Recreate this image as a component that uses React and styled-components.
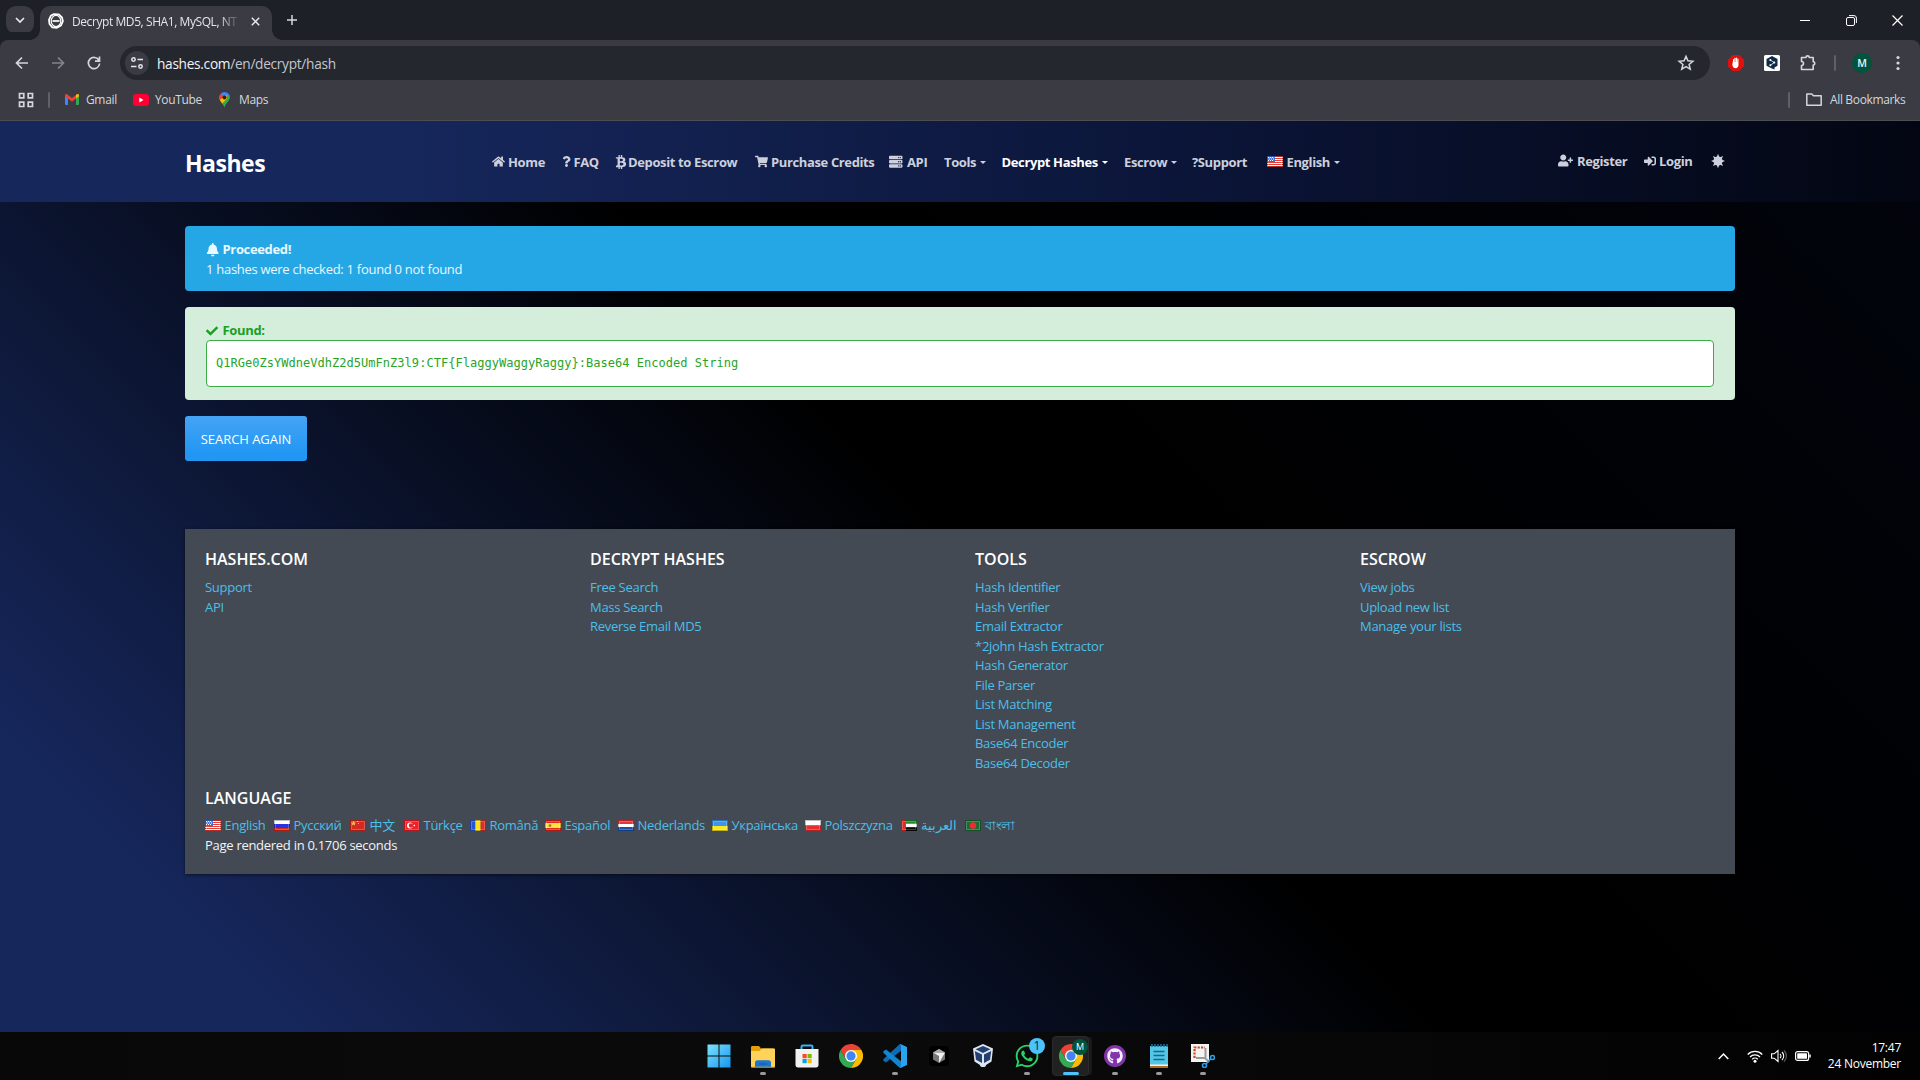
import React from "react";
import styled, { createGlobalStyle } from "styled-components";
import { FaHome, FaQuestion, FaBtc, FaShoppingCart, FaServer, FaUserPlus, FaSignInAlt, FaBell, FaCheck, FaWhatsapp, FaGithub } from "react-icons/fa";

const UI = `"Open Sans", "Noto Sans", "Noto Sans CJK SC", sans-serif`;

const GlobalStyle = createGlobalStyle`
  * { box-sizing: border-box; }
  html, body { margin: 0; background: #000; }
  body { font-family: ${UI}; overflow: hidden; }
  svg { display: block; flex: none; }
`;

const Screen = styled.div`
  width: 1920px;
  height: 1080px;
  display: flex;
  flex-direction: column;
`;

/* ---------- browser chrome ---------- */
const TabStrip = styled.div`
  height: 40px;
  background: #1d2027;
  display: flex;
  align-items: flex-start;
  padding-left: 6px;
`;
const TabSearch = styled.div`
  width: 28px;
  height: 28px;
  margin: 6px 6px 0 0;
  border-radius: 10px;
  background: #3a3b43;
  display: grid;
  place-items: center;
`;
const Tab = styled.div`
  position: relative;
  width: 232px;
  height: 34px;
  margin-top: 6px;
  border-radius: 10px 10px 0 0;
  background: #3a3b43;
  display: flex;
  align-items: center;
  padding: 0 8px 4px 8px;
  &::before, &::after {
    content: "";
    position: absolute;
    bottom: 0;
    width: 10px;
    height: 10px;
  }
  &::before { left: -10px; background: radial-gradient(circle at 0 0, transparent 9.5px, #3a3b43 10px); }
  &::after { right: -10px; background: radial-gradient(circle at 100% 0, transparent 9.5px, #3a3b43 10px); }
`;
const TabTitle = styled.div`
  width: 168px;
  margin: 0 11px 0 8px;
  white-space: nowrap;
  font-size: 12px;
  letter-spacing: -0.42px;
  color: #e4e5ea;
  mask-image: linear-gradient(90deg, #000 148px, transparent 168px);
`;
const NewTab = styled.div`
  margin: 14px 0 0 14px;
`;
const WindowButtons = styled.div`
  margin-left: auto;
  display: flex;
  height: 40px;
`;
const WindowButton = styled.div`
  width: 46px;
  display: grid;
  place-items: center;
`;
const Toolbar = styled.div`
  height: 46px;
  background: #3a3b43;
  border-radius: 8px 8px 0 0;
  box-shadow: 0 -8px 0 0 #1d2027;
  display: flex;
  align-items: center;
`;
const ToolSlot = styled.div`
  width: ${(p) => p.$w || 36}px;
  display: grid;
  place-items: center;
`;
const Omnibox = styled.div`
  margin-left: 4px;
  width: 1590px;
  height: 34px;
  border-radius: 17px;
  background: #25272f;
  display: flex;
  align-items: center;
  padding: 0 14px 0 5px;
`;
const SiteInfo = styled.div`
  width: 24px;
  height: 24px;
  border-radius: 50%;
  background: #3a3b43;
  display: grid;
  place-items: center;
`;
const Url = styled.div`
  flex: 1;
  margin-left: 8px;
  font-size: 13.7px;
  letter-spacing: -0.3px;
  color: #c3c6ce;
  b { font-weight: 400; color: #f2f3f6; }
`;
const Bookmarks = styled.div`
  height: 35px;
  background: #3a3b43;
  border-bottom: 1px solid #4d4e52;
  display: flex;
  align-items: center;
  padding: 0 15px 7px 18px;
  font-size: 12px;
  letter-spacing: -0.35px;
  color: #d5d7dd;
`;
const Divider = styled.div`
  width: 2px;
  height: 16px;
  border-radius: 1px;
  background: #5f616a;
  margin: ${(p) => p.$m || 0};
`;
const Bookmark = styled.div`
  display: flex;
  align-items: center;
  gap: ${(p) => p.$gap || 7}px;
  width: ${(p) => (p.$w ? p.$w + "px" : "auto")};
  white-space: nowrap;
`;
const Spacer = styled.div` flex: 1; `;
const Avatar = styled.div`
  width: 20px;
  height: 20px;
  border-radius: 50%;
  background: #00533f;
  color: #f0f4f2;
  font-size: 10.5px;
  font-weight: 600;
  display: grid;
  place-items: center;
`;

/* ---------- page ---------- */
const Page = styled.main`
  height: 911px;
  background: linear-gradient(45deg, #16275c 0%, #16275c 10%, #000 51%, #000 60%, #02040d 100%);
`;
const Header = styled.header`
  height: 81px;
  background: linear-gradient(90deg, #16275c 0%, #16275c 20%, #0b1538 62%, #030612 100%);
  display: flex;
  align-items: center;
  padding: 0 185px;
  color: #cdd0dc;
  font-size: 13px;
  font-weight: 700;
  letter-spacing: -0.37px;
  white-space: nowrap;
`;
const Brand = styled.div`
  width: 307px;
  font-size: 23px;
  letter-spacing: -0.5px;
  color: #fff;
  padding-top: 3px;
`;
const NavItem = styled.a`
  display: flex;
  align-items: center;
  width: ${(p) => p.$w}px;
  color: ${(p) => (p.$active ? "#fff" : "inherit")};
`;
const IconSlot = styled.span`
  width: ${(p) => p.$w}px;
  flex: none;
`;
const Caret = styled.i`
  margin: 1px 0 0 4px;
  border: 3px solid transparent;
  border-top-color: currentColor;
  border-bottom: 0;
`;
const Account = styled.div`
  margin-left: auto;
  padding-bottom: 2px;
  display: flex;
  align-items: center;
`;
const Container = styled.div`
  width: 1550px;
  margin: 0 auto;
  padding-top: 24px;
  font-size: 13px;
  line-height: 19.5px;
  letter-spacing: -0.28px;
`;
const Alert = styled.section`
  border-radius: 4px;
  padding: 14px 21px 0;
  height: ${(p) => p.$h}px;
  background: ${(p) => p.$bg};
  color: ${(p) => p.$fg};
  margin-bottom: 16px;
`;
const AlertTitle = styled.div`
  display: flex;
  align-items: center;
  gap: ${(p) => p.$gap}px;
  font-weight: 700;
  letter-spacing: -0.34px;
`;
const ResultBox = styled.div`
  height: 47px;
  margin-top: -1px;
  border: 1px solid #3aab47;
  border-radius: 4px;
  background: #fff;
  padding: 0 9px 1px;
  display: flex;
  align-items: center;
  color: #28a428;
  font: 12px "DejaVu Sans Mono", monospace;
  letter-spacing: 0.03px;
`;
const SearchAgain = styled.button`
  display: block;
  width: 122px;
  height: 45px;
  border: 0;
  border-radius: 3px;
  background: linear-gradient(#45a4f5, #2196f3 85%);
  color: #fff;
  font: 13px ${UI};
  letter-spacing: -0.05px;
  padding: 0;
  white-space: nowrap;
`;
const Footer = styled.footer`
  height: 345px;
  margin-top: 68px;
  background: #434a54;
  padding: 20px 0 0 20px;
  box-shadow: 0 1px 3px #0008;
`;
const Columns = styled.div`
  display: grid;
  grid-template-columns: repeat(4, 385px);
  height: 239px;
`;
const Heading = styled.h5`
  margin: 0 0 9px;
  font-size: 16px;
  line-height: 20px;
  font-weight: 600;
  letter-spacing: 0;
  color: #fff;
`;
const FooterLink = styled.a`
  display: block;
  color: #4bbfe8;
`;
const Languages = styled.div`
  display: flex;
  height: 19.5px;
  align-items: center;
  color: #4bbfe8;
  margin-top: -1px;
`;
const Language = styled.a`
  display: flex;
  align-items: center;
  gap: 3.5px;
  width: ${(p) => p.$w}px;
  white-space: nowrap;
`;
const Rendered = styled.div` color: #f3f4f5; `;

/* ---------- taskbar ---------- */
const Taskbar = styled.div`
  height: 48px;
  background: linear-gradient(90deg, #080808, #0b0b0b 45%, #020202);
  display: grid;
  grid-template-columns: 1fr auto 1fr;
`;
const Apps = styled.div`
  grid-column: 2;
  display: flex;
  padding-left: 2px;
`;
const AppButton = styled.div`
  position: relative;
  width: 44px;
  display: grid;
  place-items: center;
`;
const AppPlate = styled.div`
  position: absolute;
  inset: 4px 4px 4px 3px;
  border-radius: 4px;
  background: #212121;
  border: 1px solid #2b2b2b;
  box-shadow: 4px 0 0 -1px #1a1a1a;
`;
const AppArt = styled.div` position: relative; `;
const Indicator = styled.div`
  position: absolute;
  bottom: 5px;
  left: 50%;
  transform: translateX(-50%);
  width: ${(p) => (p.$active ? 16 : 6)}px;
  height: 3px;
  border-radius: 2px;
  background: ${(p) => (p.$active ? "#4cc2ff" : "#9a9a9a")};
`;
const Badge = styled.div`
  position: absolute;
  top: ${(p) => p.$top}px;
  right: -5px;
  width: 16px;
  height: 16px;
  border-radius: 50%;
  font-size: ${(p) => p.$size}px;
  line-height: 16px;
  text-align: center;
  background: ${(p) => p.$bg};
  color: ${(p) => p.$fg};
`;
const Tray = styled.div`
  display: flex;
  justify-content: flex-end;
  align-items: center;
  padding-right: 19px;
  color: #fff;
`;
const TraySlot = styled.div`
  width: ${(p) => p.$w}px;
  display: grid;
  place-items: center;
`;
const Clock = styled.div`
  width: 82px;
  text-align: right;
  font-size: 12px;
  line-height: 16px;
  letter-spacing: -0.25px;
`;

/* ---------- drawings ---------- */
const S = ({ s = 24, w, h, vb = "0 0 24 24", children, ...r }) => (
  <svg width={w || s} height={h || s} viewBox={vb} fill="none" {...r}>{children}</svg>
);

const FlagArt = {
  us: <><path fill="#fff" d="M0 0h16v11H0z" /><path stroke="#e33f3a" d="M0 .5h16M0 2.5h16M0 4.5h16M0 6.5h16M0 8.5h16M0 10.5h16" /><path fill="#3b6fd8" d="M0 0h8v6H0z" /><path stroke="#fff" strokeDasharray="1 1" d="M1 1.5h6M2 3h5M1 4.5h6" /></>,
  ru: <><path fill="#fff" d="M0 0h16v4H0z" /><path fill="#2a32e0" d="M0 4h16v4H0z" /><path fill="#d8281c" d="M0 8h16v3H0z" /></>,
  cn: <><path fill="#d42a22" d="M0 0h16v11H0z" /><path fill="#f6c945" d="m3.5 1 .8 1.6 1.7.1-1.3 1 .5 1.8-1.7-1-1.6 1 .5-1.8-1.3-1 1.8-.1zM7 1h1v1H7zM8 3h1v1H8z" /></>,
  tr: <><path fill="#ee2029" d="M0 0h16v11H0z" /><circle cx="6" cy="5.5" r="3" fill="#fff" /><circle cx="7" cy="5.5" r="2.2" fill="#ee2029" /><path fill="#fff" d="m9 5.5 2-1v2z" /></>,
  ro: <><path fill="#2a55d0" d="M0 0h5.3v11H0z" /><path fill="#fbe122" d="M5.3 0h5.4v11H5.3z" /><path fill="#e22a28" d="M10.7 0H16v11h-5.3z" /></>,
  es: <><path fill="#e0281e" d="M0 0h16v11H0z" /><path fill="#fde63c" d="M0 3h16v5H0z" /><circle cx="5" cy="5.5" r="1.5" fill="#c8762a" /></>,
  nl: <><path fill="#ea3338" d="M0 0h16v4H0z" /><path fill="#fff" d="M0 4h16v3H0z" /><path fill="#1c4fa8" d="M0 7h16v4H0z" /></>,
  ua: <><path fill="#3c95ec" d="M0 0h16v6H0z" /><path fill="#fbe722" d="M0 6h16v5H0z" /></>,
  pl: <><path fill="#fff" d="M0 0h16v5.5H0z" /><path fill="#e82d30" d="M0 5.5h16V11H0z" /></>,
  ae: <><path fill="#1f8a2d" d="M0 0h16v3.7H0z" /><path fill="#fff" d="M0 3.7h16v3.6H0z" /><path fill="#0a0a0a" d="M0 7.3h16V11H0z" /><path fill="#e62a2a" d="M0 0h5v11H0z" /></>,
  bd: <><path fill="#1c6a35" d="M0 0h16v11H0z" /><circle cx="8" cy="5.5" r="3.3" fill="#ee2d30" /></>,
};
const Flag = ({ c }) => (
  <S w={16} h={11} vb="0 0 16 11">
    {FlagArt[c]}
    <path stroke="#000" strokeOpacity=".25" d="M.5.5h15v10H.5z" />
    <path stroke="#fff" strokeOpacity=".22" d="M1.5 1.5h13v8h-13z" />
  </S>
);

const ChromeLogo = () => (
  <S vb="0 0 48 48">
    <path fill="#ea4335" d="M3.2 12A24 24 0 0 1 24 0c8.9 0 16.7 4.8 20.8 12H24L13.6 30z" />
    <path fill="#34a853" d="M3.2 12 13.6 30 24 36l10.4-6L24 48A24 24 0 0 1 3.2 12z" />
    <path fill="#fbbc04" d="M24 12h20.8A24 24 0 0 1 24 48l10.4-18z" />
    <circle cx="24" cy="24" r="12" fill="#fff" />
    <circle cx="24" cy="24" r="9.3" fill="#4285f4" />
  </S>
);
const WindowsLogo = () => (
  <S>
    <defs><linearGradient id="win" x1="0" y1="0" x2="1" y2="1"><stop stopColor="#7de3fb" /><stop offset="1" stopColor="#1796f0" /></linearGradient></defs>
    <path fill="url(#win)" d="M.5.5h11v11H.5zM12.500.5h11v11h-11zM.5 12.5h11v11H.5zM12.5 12.5h11v11h-11z" />
  </S>
);
const ExplorerLogo = () => (
  <S>
    <path fill="#e3a008" d="M0 3.500C0 2.500.6 2 1.5 2H8l2 2.5h12.5V10H0z" />
    <path fill="#ffd25a" d="M0 7h8.5L11 4.5h12c.6 0 1 .4 1 1V22.500c0 .6-.4 1-1 1H1c-.6 0-1-.4-1-1z" />
    <path fill="#1976d2" d="M4 23.500V19c0-1.700 1-2.700 2.600-2.700h10.800c1.700 0 2.600 1 2.600 2.700v4.500z" />
    <path stroke="#0e5aa8" d="M8 20h8" />
    <path fill="#e8a317" d="M0 22.500h24c0 .6-.4 1-1 1H1c-.6 0-1-.4-1-1z" opacity=".6" />
  </S>
);
const StoreLogo = () => (
  <S>
    <path stroke="#35b4f0" strokeWidth="2" d="M6.500 6V2.800c0-.7.4-1.300 1.200-1.300h8.600c.8 0 1.200.5 1.200 1.300V6" />
    <path fill="#f1f1f1" d="M.5 5h23v16c0 1.500-1 2.500-2.500 2.500H3C1.500 23.500.5 22.500.5 21z" />
    <path fill="#f25022" d="M7.500 10h4.200v4.200H7.500z" /><path fill="#7fba00" d="M12.500 10h4.200v4.200h-4.200z" />
    <path fill="#00a4ef" d="M7.500 15h4.200v4.200H7.500z" /><path fill="#ffb900" d="M12.500 15h4.200v4.200h-4.200z" />
  </S>
);
const CodeLogo = () => (
  <S>
    <path fill="#0b6cb5" d="M18 0v6.800L3 18.600.3 16.800v-1.500L16 .8z" />
    <path fill="#1384cf" d="M18 24v-6.800L3 5.400.3 7.200v1.500L16 23.200z" />
    <path fill="#2aa4ee" d="M17.500 0 24 3v18l-6.500 3-1.500-.8c1.200.6 2-.3 2-1.200V2c0-.9-.8-1.800-2-1.200z" />
  </S>
);
const CubeEditorLogo = () => (
  <S s={20} vb="0 0 20 20">
    <rect width="20" height="20" rx="4" fill="#000" />
    <path fill="#777" d="m10 3 6 3.500v7L10 17l-6-3.500v-7z" />
    <path fill="#f0f0f0" d="M4 6.500h12L10 17v-7z" /><path fill="#aaa" d="m10 3 6 3.500H4z" />
  </S>
);
const VBoxLogo = () => (
  <S>
    <path fill="#dfe6f2" d="m12 0 10 4.500-1.500 13L15 21c0 1.500-1 2-3 2s-3-.5-3-2l-5.500-3.500L2 4.500z" />
    <path fill="#22406f" d="m12 2 7.500 3.200L12 9 4.500 5.200zM3.800 7l7.200 3.600V19l-6-3.300zM20.200 7 13 10.600V19l6-3.300z" />
  </S>
);
const NotepadLogo = () => (
  <S>
    <path fill="#56c6e6" d="M3 2h18v19H3z" /><path fill="#f4f4f4" d="M3 20.500h18v1.500H3z" /><path fill="#b86a1c" d="M3 22h18v2H3z" />
    <path stroke="#1b6f96" strokeWidth="1.500" d="M5 0v3M8 0v3M11 0v3M14 0v3M17 0v3M20 0v3" />
    <path stroke="#13698f" strokeWidth="1.300" d="M6.500 7.500h11M6.500 11.500h11M6.500 15.500h11" />
  </S>
);
const SnipLogo = () => (
  <S>
    <path fill="#f3f3f3" d="M0 0h18v18H0z" />
    <path stroke="#d1421d" strokeWidth="2.200" strokeDasharray="2.200 1.200" d="M3.500 14V3.500H14" />
    <path stroke="#9b9b9b" strokeWidth="2" d="M5 14h9.500V4M14 14l4 4" />
    <circle cx="21.500" cy="13.500" r="2" stroke="#2f9fe0" strokeWidth="1.600" /><circle cx="13.500" cy="21.500" r="2" stroke="#2f9fe0" strokeWidth="1.600" />
    <path stroke="#2f9fe0" strokeWidth="1.600" d="m19.500 15-4.500 5" />
  </S>
);
const GithubLogo = () => (
  <S><circle cx="12" cy="12" r="11" fill="#8035a8" /><g transform="translate(4 4)"><FaGithub size={16} color="#f5eefa" /></g></S>
);

const apps = [
  { art: <WindowsLogo /> },
  { art: <ExplorerLogo />, open: true },
  { art: <StoreLogo /> },
  { art: <ChromeLogo /> },
  { art: <CodeLogo />, open: true },
  { art: <CubeEditorLogo /> },
  { art: <VBoxLogo /> },
  { art: <><FaWhatsapp size={26} color="#25d366" /><Badge $top={-5} $size={12} $bg="#4cc2ff" $fg="#082a3c">1</Badge></>, open: true },
  { art: <><ChromeLogo /><Badge $top={-5} $size={9} $bg="#00533f" $fg="#fff">M</Badge></>, open: true, active: true },
  { art: <GithubLogo />, open: true },
  { art: <NotepadLogo />, open: true },
  { art: <SnipLogo />, open: true },
];

const nav = [
  { w: 69, icon: <FaHome size={13} />, iw: 16, text: "Home" },
  { w: 52.5, icon: <FaQuestion size={11} />, iw: 12.5, text: "FAQ" },
  { w: 141.5, icon: <FaBtc size={14} />, iw: 14.5, text: "Deposit to Escrow" },
  { w: 134, icon: <FaShoppingCart size={13} />, iw: 16, text: "Purchase Credits" },
  { w: 55, icon: <FaServer size={13.500} />, iw: 18, text: "API" },
  { w: 57.5, text: "Tools", caret: true },
  { w: 122.5, text: "Decrypt Hashes", caret: true, active: true },
  { w: 68, text: "Escrow", caret: true },
  { w: 75, text: "?Support" },
  { w: 74, icon: <Flag c="us" />, iw: 19.5, text: "English", caret: true },
];

const footer = [
  ["HASHES.COM", ["Support", "API"]],
  ["DECRYPT HASHES", ["Free Search", "Mass Search", "Reverse Email MD5"]],
  ["TOOLS", ["Hash Identifier", "Hash Verifier", "Email Extractor", "*2john Hash Extractor", "Hash Generator", "File Parser", "List Matching", "List Management", "Base64 Encoder", "Base64 Decoder"]],
  ["ESCROW", ["View jobs", "Upload new list", "Manage your lists"]],
];

const languages = [
  ["us", "English", 69], ["ru", "Русский", 76], ["cn", "中文", 54], ["tr", "Türkçe", 66], ["ro", "Română", 75],
  ["es", "Español", 73], ["nl", "Nederlands", 94], ["ua", "Українська", 93], ["pl", "Polszczyzna", 96], ["ae", "العربية", 64], ["bd", "বাংলা", 60],
];

function Browser() {
  return (
    <>
      <TabStrip>
        <TabSearch><S s={10} vb="0 0 10 10"><path stroke="#e8e9ee" strokeWidth="1.700" d="m1 3 4 4 4-4" /></S></TabSearch>
        <Tab>
          <S s={16} vb="0 0 16 16"><path stroke="#fff" strokeWidth="1.800" strokeLinejoin="round" d="m5.500 1.200 5.300.2 3.200 3.100.9 3.700-2 4.300-4 2.300-4.600-.4L1.500 11 1 6.800l1.800-4z" /><ellipse cx="8" cy="8" rx="4.800" ry="5.600" stroke="#fff" strokeWidth="1.200" /><path stroke="#fff" strokeWidth="1.700" d="M4.500 8h7" /></S>
          <TabTitle>Decrypt MD5, SHA1, MySQL, NT</TabTitle>
          <S s={9} vb="0 0 9 9"><path stroke="#e8e9ee" strokeWidth="1.500" d="m.8.8 7.400 7.400M8.200.8.8 8.200" /></S>
        </Tab>
        <NewTab><S s={12} vb="0 0 12 12"><path stroke="#d5d7dd" strokeWidth="1.500" d="M6 1v10M1 6h10" /></S></NewTab>
        <WindowButtons>
          <WindowButton><S s={10} vb="0 0 10 10"><path stroke="#fff" d="M0 5.500h10" /></S></WindowButton>
          <WindowButton><S s={11} vb="0 0 11 11"><rect x=".5" y="2.500" width="8" height="8" rx="1.500" stroke="#fff" /><path stroke="#fff" d="M3 .6h5A2.400 2.400 0 0 1 10.400 3v5" /></S></WindowButton>
          <WindowButton><S s={11} vb="0 0 11 11"><path stroke="#fff" strokeWidth="1.200" d="m.5.5 10 10m0-10-10 10" /></S></WindowButton>
        </WindowButtons>
      </TabStrip>
      <Toolbar>
        <ToolSlot $w={44}><S s={14} vb="0 0 14 14"><path stroke="#d5d7dd" strokeWidth="1.700" d="M13 7H2M7 1.500 1.500 7 7 12.500" /></S></ToolSlot>
        <ToolSlot $w={28}><S s={14} vb="0 0 14 14"><path stroke="#83858d" strokeWidth="1.700" d="M1 7h11M7 1.500 12.500 7 7 12.500" /></S></ToolSlot>
        <ToolSlot $w={44}><S s={14} vb="0 0 14 14"><path stroke="#d5d7dd" strokeWidth="1.700" d="M12 4.500A5.600 5.600 0 1 0 12.600 7.500M12.500.5v4.700H8" /></S></ToolSlot>
        <Omnibox>
          <SiteInfo><S s={14} vb="0 0 14 14"><g stroke="#e3e5ea" strokeWidth="1.500"><circle cx="3.500" cy="3.500" r="1.700" /><path d="M7.500 3.500H13M1 10.500h5.500" /><circle cx="10.500" cy="10.500" r="1.700" /></g></S></SiteInfo>
          <Url><b>hashes.com</b>/en/decrypt/hash</Url>
          <S s={20}><path stroke="#d5d7dd" strokeWidth="1.800" d="m12 4 2.300 5.400 5.900.5-4.500 3.800 1.400 5.700L12 16.300l-5.100 3.100 1.400-5.700-4.500-3.800 5.900-.5z" /></S>
        </Omnibox>
        <ToolSlot $w={52}><S s={16} vb="0 0 16 16"><path fill="#e0110c" d="M4.700 0h6.600L16 4.700v6.600L11.300 16H4.700L0 11.300V4.700z" /><path fill="#fff" d="M5 6V4.500c0-.7 1-.7 1 0V7h.3V3.300c0-.8 1.200-.8 1.200 0V7h.3V3c0-.8 1.200-.8 1.200 0v4h.3V4c0-.7 1.200-.7 1.200 0v6c0 2-1.200 3.200-3 3.200S4.600 12 4.300 9.500z" /></S></ToolSlot>
        <ToolSlot $w={20}><S s={16} vb="0 0 16 16"><rect width="16" height="16" rx="1.500" fill="#fff" /><path fill="#0f2b46" d="m8 1 5.500 3v6.800L10.500 12.500v2L8 13.500 2.500 10.800V4z" /><path stroke="#fff" strokeWidth=".8" d="m6.300 5 4 2.600-4 2.600" /><circle cx="6.300" cy="5" r="1" fill="#fff" /><circle cx="10.300" cy="7.600" r="1" fill="#fff" /><circle cx="6.300" cy="10.200" r="1" fill="#fff" /></S></ToolSlot>
        <ToolSlot $w={52}><S s={18} vb="0 0 18 18"><path stroke="#d5d7dd" strokeWidth="1.600" strokeLinejoin="round" d="M2.500 3.500H7a1.600 1.600 0 0 1 3.200 0h4v4.300a1.600 1.600 0 0 1 0 3.200v4.500H2.500v-4a2 2 0 0 0 0-4z" /></S></ToolSlot>
        <Divider />
        <ToolSlot $w={52}><Avatar>M</Avatar></ToolSlot>
        <ToolSlot $w={20}><S w={4} h={16} vb="0 0 4 16"><g fill="#d5d7dd"><circle cx="2" cy="2.500" r="1.600" /><circle cx="2" cy="8" r="1.600" /><circle cx="2" cy="13.500" r="1.600" /></g></S></ToolSlot>
      </Toolbar>
      <Bookmarks>
        <S s={16} vb="0 0 16 16"><path stroke="#d5d7dd" strokeWidth="1.700" d="M1.500 1.500h4.300v4.300H1.500zM10.200 1.500h4.300v4.300h-4.300zM1.500 10.200h4.300v4.300H1.500zM10.200 10.200h4.300v4.300h-4.300z" /></S>
        <Divider $m="0 15px 0 14px" />
        <Bookmark $w={68}><S w={14} h={11} vb="0 0 14 11"><path fill="#4285f4" d="M0 1.500 3 4v7H1a1 1 0 0 1-1-1z" /><path fill="#34a853" d="M14 1.500 11 4v7h2a1 1 0 0 0 1-1z" /><path fill="#ea4335" d="M0 1.500C0 0 1.500-.3 2.500.6L7 4l4.500-3.400L11 4.500 7 7.700 3 4.500 0 2.500z" /><path fill="#fbbc04" d="M14 1.500c0-1.500-1.500-1.800-2.500-.9L11 1v3.500l3-2.200z" /></S>Gmail</Bookmark>
        <Bookmark $w={85} $gap={6}><S w={16} h={12} vb="0 0 16 12"><rect width="16" height="12" rx="3" fill="#f03" /><path fill="#fff" d="m6.300 3.500 4.200 2.500-4.200 2.500z" /></S>YouTube</Bookmark>
        <Bookmark $gap={8}><S w={13} h={16} vb="0 0 13 16"><path fill="#34a853" d="M6.500 16C6 12.500 1.500 9.500 1 6l10.700-3c1.500 6-4.500 7.500-5.200 13z" /><path fill="#4285f4" d="M2.500 2A5.500 5.500 0 0 1 11.500 3L4 9.500z" /><path fill="#ea4335" d="M2.500 2 6 4 2.300 8C.5 6 .5 4 2.500 2z" /><path fill="#fbbc04" d="M2 7.700 8.500 3 9 6.500l-4.800 5C3.300 10 2.300 9 2 7.700z" /><circle cx="6.500" cy="5.600" r="2" fill="#25272f" /></S>Maps</Bookmark>
        <Spacer />
        <Divider $m="0 16px 0 0" />
        <Bookmark $w={99} $gap={8}><S w={16} h={13} vb="0 0 16 13"><path stroke="#d5d7dd" strokeWidth="1.500" strokeLinejoin="round" d="M.8 1h5L7.500 2.800h7.700v9.400H.8z" /></S>All Bookmarks</Bookmark>
      </Bookmarks>
    </>
  );
}

export default function App() {
  return (
    <Screen>
      <GlobalStyle />
      <Browser />
      <Page>
        <Header>
          <Brand>Hashes</Brand>
          {nav.map((n) => (
            <NavItem key={n.text} $w={n.w} $active={n.active}>
              {n.icon && <IconSlot $w={n.iw}>{n.icon}</IconSlot>}
              {n.text}
              {n.caret && <Caret />}
            </NavItem>
          ))}
          <Account>
            <NavItem $w={86}><IconSlot $w={19}><FaUserPlus size={15} /></IconSlot>Register</NavItem>
            <NavItem $w={67}><IconSlot $w={15}><FaSignInAlt size={12} /></IconSlot>Login</NavItem>
            <NavItem $w={24}><S s={14} vb="0 0 14 14"><g fill="#cdd0dc"><circle cx="7" cy="7" r="4.500" />{[0, 45, 90, 135, 180, 225, 270, 315].map((a) => <path key={a} transform={`rotate(${a} 7 7)`} d="M5.500 3.500 7-.2l1.500 3.700z" />)}</g></S></NavItem>
          </Account>
        </Header>
        <Container>
          <Alert $h={65} $bg="#25a7e6" $fg="#e9f7fe">
            <AlertTitle $gap={3}><FaBell size={13.500} />Proceeded!</AlertTitle>
            1 hashes were checked: 1 found 0 not found
          </Alert>
          <Alert $h={93} $bg="#d5eddb" $fg="#1aa01f">
            <AlertTitle $gap={4.5}><FaCheck size={12} />Found:</AlertTitle>
            <ResultBox>Q1RGe0ZsYWdneVdhZ2d5UmFnZ3l9:CTF&#123;FlaggyWaggyRaggy&#125;:Base64 Encoded String</ResultBox>
          </Alert>
          <SearchAgain>SEARCH AGAIN</SearchAgain>
          <Footer>
            <Columns>
              {footer.map(([title, links]) => (
                <div key={title}>
                  <Heading>{title}</Heading>
                  {links.map((l) => <FooterLink key={l}>{l}</FooterLink>)}
                </div>
              ))}
            </Columns>
            <Heading>LANGUAGE</Heading>
            <Languages>
              {languages.map(([c, t, w]) => <Language key={c} $w={w}><Flag c={c} />{t}</Language>)}
            </Languages>
            <Rendered>Page rendered in 0.1706 seconds</Rendered>
          </Footer>
        </Container>
      </Page>
      <Taskbar>
        <Apps>
          {apps.map((a, i) => (
            <AppButton key={i}>
              {a.active && <AppPlate />}
              <AppArt>{a.art}</AppArt>
              {a.open && <Indicator $active={a.active} />}
            </AppButton>
          ))}
        </Apps>
        <Tray>
          <TraySlot $w={32}><S s={11} vb="0 0 11 11"><path stroke="#fff" strokeWidth="1.500" d="M.7 8 5.500 3l4.800 5" /></S></TraySlot>
          <TraySlot $w={32}><S w={16} h={13} vb="0 0 16 13"><g stroke="#fff" strokeWidth="1.300"><path d="M.7 4.500a10.300 10.300 0 0 1 14.600 0M3 7a7 7 0 0 1 10 0M5.200 9.300a4 4 0 0 1 5.600 0" /></g><circle cx="8" cy="11.300" r="1.500" fill="#fff" /></S></TraySlot>
          <TraySlot $w={16}><S w={16} h={14} vb="0 0 16 14"><g stroke="#fff" strokeWidth="1.100"><path d="M.6 4.800h2.600L7 1.500v11L3.200 9.200H.6zM9 4.800a3 3 0 0 1 0 4.400M11 3a5.500 5.500 0 0 1 0 8" /><path stroke="#666" d="M13 1.500a7.500 7.500 0 0 1 0 11" /></g></S></TraySlot>
          <TraySlot $w={32}><S w={16} h={10} vb="0 0 16 10"><rect x=".6" y=".6" width="13" height="8.800" rx="2" stroke="#fff" strokeWidth="1.200" /><rect x="2.200" y="2.200" width="9.800" height="5.600" rx=".6" fill="#fff" /><path stroke="#fff" strokeWidth="1.500" d="M15 3.500v3" /></S></TraySlot>
          <Clock>17:47<br />24 November</Clock>
        </Tray>
      </Taskbar>
    </Screen>
  );
}
